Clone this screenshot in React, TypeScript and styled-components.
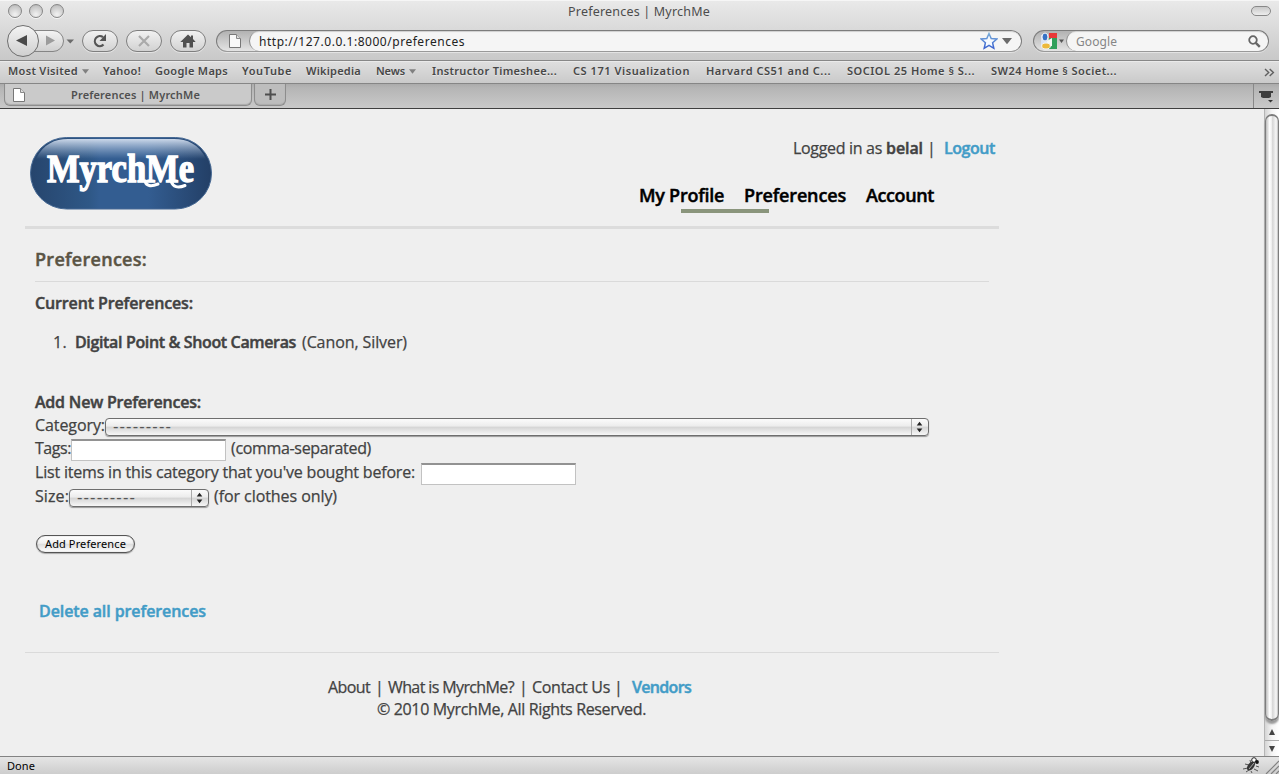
import React, { useLayoutEffect, useRef, useState } from 'react';
import styled, { createGlobalStyle, css } from 'styled-components';

const GlobalStyle = createGlobalStyle`
  html, body { margin: 0; padding: 0; overflow: hidden; }
  *, *::before, *::after { box-sizing: border-box; }
`;

const chromeFont = "'Noto Sans', 'Open Sans', sans-serif";
const pageFont = "'Open Sans', 'Noto Sans', sans-serif";

/* Text tracked so that it fills a known width */
const TrackedText = styled.span<{ $width: number }>`
  display: inline-block;
  flex: none;
  width: ${(p) => p.$width}px;
  white-space: nowrap;
`;

function Text({ w, children }: { w: number; children: string }) {
  const ref = useRef<HTMLSpanElement>(null);
  const [spacing, setSpacing] = useState(0);
  useLayoutEffect(() => {
    const el = ref.current;
    if (!el) return;
    const natural = el.getBoundingClientRect().width;
    setSpacing((w - natural) / Math.max(1, children.length));
  }, [w, children]);
  return (
    <TrackedText $width={w}>
      <span ref={ref} style={{ letterSpacing: `${spacing}px` }}>{children}</span>
    </TrackedText>
  );
}

const Window = styled.div`
  display: flex;
  flex-direction: column;
  width: 1279px;
  height: 774px;
  background: #efefef;
  font-family: ${chromeFont};
  overflow: hidden;
`;

/* ---------- title bar and toolbar ---------- */

const TopChrome = styled.div`
  height: 61px;
  background: linear-gradient(#e9e9e9 0, #dcdcdc 24px, #c8c8c8 60px);
  border-top: 1px solid #f6f6f6;
  border-bottom: 1px solid #878787;
`;

const TitleBar = styled.div`
  display: grid;
  grid-template-columns: 1fr auto 1fr;
  align-items: center;
  height: 21px;
  padding: 0 8px 0 7px;
  font-size: 12.5px;
  color: #4c4c4c;
`;

const Lights = styled.div`
  display: flex;
  gap: 7px;
  margin: 0 0 2px 1px;
`;

const Light = styled.span`
  width: 14px;
  height: 14px;
  border: 1px solid #878787;
  border-radius: 50%;
  background: radial-gradient(circle at 50% 80%, #ededed 10%, #c4c4c4 75%, #a5a5a5);
  box-shadow: 0 1px 0 #f4f4f4;
`;

const TitlePill = styled.span`
  justify-self: end;
  width: 20px;
  height: 10px;
  margin-bottom: 2px;
  border: 1px solid #888;
  border-radius: 5px;
  background: linear-gradient(#c9c9c9, #ededed);
`;

const Toolbar = styled.div`
  display: flex;
  align-items: center;
  height: 38px;
  padding: 0 10px 0 6px;
`;

const BackForward = styled.svg`
  flex: none;
  width: 70px;
  height: 36px;
  margin-right: 6px;
`;

const ToolButton = styled.span`
  display: flex;
  align-items: center;
  justify-content: center;
  flex: none;
  width: 36px;
  height: 22px;
  margin-right: 8px;
  border: 1px solid #7e7e7e;
  border-radius: 11px;
  background: linear-gradient(#f1f1f1, #d2d2d2);
  box-shadow: 0 1px 0 #e3e3e3;
`;

const Field = styled.div<{ $width: number }>`
  display: flex;
  flex: none;
  width: ${(p) => p.$width}px;
  height: 22px;
  border: 1px solid #7c7c7c;
  border-bottom-color: #999;
  border-radius: 11px;
  background: linear-gradient(#b2b2b2, #e4e4e4);
  box-shadow: 0 1px 0 #e3e3e3;
  overflow: hidden;
`;

const FieldIcon = styled.span<{ $width: number }>`
  display: flex;
  align-items: center;
  justify-content: center;
  flex: none;
  width: ${(p) => p.$width}px;
`;

const FieldInput = styled.div<{ $color: string }>`
  display: flex;
  align-items: center;
  flex: 1;
  padding: 0 7px 0 9px;
  border-left: 1px solid #8a8a8a;
  border-radius: 11px;
  background: #f5f5f5;
  box-shadow: inset 0 2px 1px -1px #cfcfcf;
  font-size: 12px;
  color: ${(p) => p.$color};
  > svg:first-of-type { margin-left: auto; }
`;

/* ---------- bookmarks and tabs ---------- */

const Bookmarks = styled.div`
  display: flex;
  align-items: center;
  height: 23px;
  padding: 0 4px 1px 8px;
  background: linear-gradient(#dedede, #cacaca);
  border-top: 1px solid #eaeaea;
  border-bottom: 1px solid #868686;
  font-size: 11px;
  font-weight: 600;
  color: #474747;
  text-shadow: 0 1px 0 #e5e5e5;
`;

const Bookmark = styled.span<{ $gap: number }>`
  display: flex;
  align-items: flex-start;
  height: 20px;
  line-height: 18px;
  margin-right: ${(p) => p.$gap}px;
  svg { margin: 6px 0 0 4px; }
`;

const More = styled.svg`
  margin-left: auto;
`;

const TabStrip = styled.div`
  display: flex;
  height: 25px;
  background: linear-gradient(#ababab, #b5b5b5 4px, #c9c9c9);
  border-bottom: 1px solid #3f3f3f;
`;

const tabShape = css`
  height: 22px;
  border: 1px solid #8d8d8d;
  border-top: 0;
  border-radius: 0 0 6px 6px;
  box-shadow: inset 0 -1px 1px #aaa;
`;

const Tab = styled.div`
  ${tabShape}
  display: flex;
  align-items: center;
  width: 248px;
  margin-left: 4px;
  padding-left: 7px;
  background: #cacaca;
  font-size: 11px;
  font-weight: 600;
  color: #505050;
  svg { margin-right: 45px; }
`;

const NewTab = styled.div`
  ${tabShape}
  display: flex;
  align-items: center;
  justify-content: center;
  width: 32px;
  margin-left: 2px;
  background: #bdbdbd;
`;

const TabList = styled.div`
  display: flex;
  align-items: center;
  width: 26px;
  margin-left: auto;
  padding-left: 5px;
  border-left: 1px solid #888;
`;

/* ---------- page ---------- */

const Viewport = styled.div`
  display: flex;
  flex: 1;
  min-height: 0;
`;

const Page = styled.div`
  flex: 1;
  padding-left: 25px;
  background: #efefef;
  font-family: ${pageFont};
  font-size: 16px;
  color: #424242;
  -webkit-text-stroke: 0.25px currentColor;
`;

const Header = styled.header`
  display: flex;
  justify-content: space-between;
  width: 974px;
  height: 120px;
  padding: 28px 4px 0 5px;
  border-bottom: 3px solid #dcdcdc;
`;

const HeaderRight = styled.div`
  display: flex;
  flex-direction: column;
`;

const Login = styled.div`
  display: flex;
  justify-content: flex-end;
  height: 22px;
  line-height: 22px;
`;

const Spacer = styled.span<{ $w: number }>`
  flex: none;
  width: ${(p) => p.$w}px;
`;

const strongText = css`
  font-weight: 600;
  -webkit-text-stroke: 0.45px currentColor;
`;

const Strong = styled.span`
  ${strongText}
`;

const Link = styled.a`
  ${strongText}
  color: #429cc7;
`;

const Nav = styled.nav`
  ${strongText}
  position: relative;
  display: flex;
  gap: 20px;
  height: 26px;
  margin-top: 23px;
  padding-right: 61px;
  line-height: 26px;
  font-size: 18px;
  color: #000;
  &::after {
    content: '';
    position: absolute;
    left: 42px;
    top: 27px;
    width: 88px;
    height: 4px;
    background: #8a957c;
  }
`;

const Main = styled.main`
  width: 974px;
  height: 423px;
  padding: 0 10px;
`;

const Title = styled.h1`
  ${strongText}
  height: 53px;
  margin: 0;
  padding-top: 17px;
  border-bottom: 1px solid #dadada;
  font-size: 18px;
  line-height: 26px;
  color: #5a5444;
`;

const Line = styled.div<{ $top?: number; $indent?: number; $bold?: boolean }>`
  display: flex;
  align-items: center;
  height: 24px;
  margin-top: ${(p) => p.$top ?? 0}px;
  padding-left: ${(p) => p.$indent ?? 0}px;
  line-height: 22px;
  ${(p) => p.$bold && strongText}
`;

const FormRow = styled.div<{ $h?: number }>`
  display: flex;
  align-items: center;
  height: ${(p) => p.$h ?? 24}px;
  line-height: 22px;
  > ${TrackedText} { margin-bottom: 2px; }
`;

const Input = styled.span`
  flex: none;
  width: 155px;
  height: 22px;
  margin-top: 2px;
  border: 1px solid #c2c2c2;
  border-top: 2px solid #929292;
  background: #fff;
`;

const SelectBox = styled.span<{ $width: number }>`
  display: flex;
  justify-content: space-between;
  flex: none;
  width: ${(p) => p.$width}px;
  height: 18px;
  margin-top: 3px;
  padding-left: 7px;
  border: 1px solid #6e6e6e;
  border-radius: 4px;
  background: linear-gradient(#fbfbfb, #ececec 45%, #d4d4d4 50%, #f7f7f7);
  box-shadow: 0 1px 1px #999;
  line-height: 17px;
  font-family: 'DejaVu Sans', sans-serif;
  font-size: 15px;
  color: #555;
  -webkit-text-stroke: 0;
`;

const Stepper = styled.svg`
  flex: none;
  border-left: 1px solid #aaa;
`;

const Button = styled.button`
  display: flex;
  align-items: center;
  width: 99px;
  height: 18px;
  margin: 27px 0 0 1px;
  padding: 0 0 0 8px;
  border: 1px solid #555;
  border-radius: 10px;
  background: linear-gradient(#fff, #f0f0f0 45%, #dedede 52%, #fff);
  box-shadow: inset 0 0 1px #777, 0 1px 1px #aaa;
  font-family: ${chromeFont};
  font-size: 11px;
  line-height: 14px;
  color: #000;
  -webkit-text-stroke: 0;
`;

const Footer = styled.footer`
  width: 974px;
  padding-top: 23px;
  border-top: 1px solid #dadada;
`;

const FooterLine = styled.div<{ $left: number }>`
  display: flex;
  height: 22px;
  padding-left: ${(p) => p.$left}px;
  line-height: 22px;
`;

/* ---------- scrollbar and status bar ---------- */

const Scrollbar = styled.div`
  display: flex;
  flex-direction: column;
  width: 15px;
  padding-top: 5px;
  border-left: 1px solid #b5b5b5;
  background: linear-gradient(90deg, #d5d5d5, #f5f5f5 50%, #fff);
`;

const Thumb = styled.div`
  flex: 1;
  border: 2px solid #7d7d7d;
  border-left-width: 1px;
  border-right-width: 1px;
  border-radius: 7px;
  background: linear-gradient(90deg, #bdbdbd, #fff 30%, #ededed 48%, #d6d6d6 55%, #f8f8f8 85%, #bbb);
  box-shadow: 0 3px 2px #999;
`;

const ScrollArrow = styled.span<{ $top?: number }>`
  display: flex;
  align-items: center;
  justify-content: center;
  height: 16px;
  margin-top: ${(p) => p.$top ?? 0}px;
  border-top: ${(p) => (p.$top ? '0' : '1px solid #aaa')};
`;

const StatusBar = styled.div`
  display: flex;
  align-items: center;
  height: 18px;
  padding-left: 7px;
  border-top: 1px solid #838383;
  background: linear-gradient(#e5e5e5, #cdcdcd);
  font-size: 11px;
  color: #000;
`;

const StatusIcons = styled.svg`
  margin-left: auto;
`;

const DownArrow = ({ w = 7, fill = '#808080' }: { w?: number; fill?: string }) => (
  <svg width={w} height={w} viewBox="0 0 8 8"><path d="M0 1.5h8L4 6.5z" fill={fill} /></svg>
);

const PageIcon = ({ fill = '#f8f8f8' }: { fill?: string }) => (
  <svg width="14" height="16" viewBox="0 0 14 16">
    <path d="M1.5 1.5h7l4 4v9h-11z" fill={fill} stroke="#777" />
    <path d="M8.5 1.5v4h4" fill="#ddd" stroke="#888" />
  </svg>
);

const LogoSvg = styled.svg`
  flex: none;
  overflow: visible;
`;

const Logo = () => (
  <LogoSvg width="182" height="73" viewBox="0 0 182 73">
    <defs>
      <linearGradient id="pill">
        <stop offset="0" stopColor="#26456d" />
        <stop offset=".33" stopColor="#2f5887" />
        <stop offset=".38" stopColor="#335d91" />
        <stop offset=".65" stopColor="#335d91" />
        <stop offset="1" stopColor="#233f66" />
      </linearGradient>
      <linearGradient id="gloss" x2="0" y2="1">
        <stop offset="0" stopColor="#d3deee" stopOpacity=".95" />
        <stop offset="1" stopColor="#a5bedc" stopOpacity="0" />
      </linearGradient>
    </defs>
    <rect x=".5" y=".5" width="181" height="71.5" rx="36" fill="url(#pill)" stroke="#466994" />
    <path d="M6 22C13 7 25 2 38 2H144C157 2 169 7 176 22Z" fill="url(#gloss)" />
    <g fill="#fff" stroke="#fff">
      <text x="17" y="44.5" textLength="147" lengthAdjust="spacingAndGlyphs" fontFamily="'Liberation Serif', serif" fontSize="40" fontWeight="700" strokeWidth="1.4">MyrchMe</text>
      <path d="M115 44Q117 51.5 128 47M141 44Q144 53 155 48.5" fill="none" strokeWidth="3" strokeLinecap="round" />
    </g>
  </LogoSvg>
);

const StepperArrows = () => (
  <Stepper width="17" height="16" viewBox="0 0 17 16">
    <path d="M5 6.5L8 2.5l3 4zM5 9.5l3 4 3-4z" fill="#222" />
  </Stepper>
);

const bookmarks: { label: string; w: number; gap: number; menu?: boolean }[] = [
  { label: 'Most Visited', w: 70, gap: 14, menu: true },
  { label: 'Yahoo!', w: 38, gap: 14 },
  { label: 'Google Maps', w: 73, gap: 14 },
  { label: 'YouTube', w: 50, gap: 14 },
  { label: 'Wikipedia', w: 55, gap: 15 },
  { label: 'News', w: 29, gap: 16, menu: true },
  { label: 'Instructor Timeshee...', w: 125, gap: 16 },
  { label: 'CS 171 Visualization', w: 117, gap: 16 },
  { label: 'Harvard CS51 and C...', w: 125, gap: 16 },
  { label: 'SOCIOL 25 Home § S...', w: 128, gap: 16 },
  { label: 'SW24 Home § Societ...', w: 126, gap: 0 },
];

export default function App() {
  return (
    <Window>
      <GlobalStyle />
      <TopChrome>
        <TitleBar>
          <Lights><Light /><Light /><Light /></Lights>
          <Text w={142}>Preferences | MyrchMe</Text>
          <TitlePill />
        </TitleBar>
        <Toolbar>
          <BackForward viewBox="0 0 70 36">
            <defs>
              <linearGradient id="btn" x2="0" y2="1">
                <stop offset="0" stopColor="#f4f4f4" />
                <stop offset="1" stopColor="#cfcfcf" />
              </linearGradient>
            </defs>
            <rect x="12" y="7.5" width="45.5" height="21" rx="10.5" fill="url(#btn)" stroke="#858585" />
            <circle cx="17" cy="18" r="15.5" fill="url(#btn)" stroke="#6e6e6e" />
            <path d="M10 17.5L21 12v11z" fill="#4a4a4a" />
            <path d="M49 17.5L40 12.5v10z" fill="#9c9c9c" />
            <path d="M60.5 16.5h7.5l-3.7 4z" fill="#6b6b6b" />
          </BackForward>
          <ToolButton>
            <svg width="16" height="16" viewBox="0 0 16 16">
              <path d="M11.5 11.5A5 5 0 1 1 11 4.2" fill="none" stroke="#555" strokeWidth="2.2" />
              <path d="M14 1v7H7.5z" fill="#555" />
            </svg>
          </ToolButton>
          <ToolButton>
            <svg width="14" height="14" viewBox="0 0 14 14">
              <path d="M2 2l10 10M12 2L2 12" stroke="#aaa" strokeWidth="2.2" />
            </svg>
          </ToolButton>
          <ToolButton>
            <svg width="16" height="14" viewBox="0 0 16 14">
              <path d="M8 .5L11 3.3V1.5h2v3.6L15.7 8H13v5.5H9.5V9h-3v4.5H3V8H.3z" fill="#505050" />
            </svg>
          </ToolButton>
          <Spacer $w={2} />
          <Field $width={806}>
            <FieldIcon $width={32}><Spacer $w={4} /><PageIcon /></FieldIcon>
            <FieldInput $color="#222">
              <Text w={206}>http://127.0.0.1:8000/preferences</Text>
              <svg width="18" height="18" viewBox="0 0 18 18">
                <defs>
                  <linearGradient id="star" x2="0" y2="1">
                    <stop offset="0" stopColor="#79acd9" />
                    <stop offset="1" stopColor="#3a62cf" />
                  </linearGradient>
                </defs>
                <path d="M9 1.5l2.2 5 5.6.5-4.2 3.7 1.2 5.6L9 13.4l-4.8 2.9 1.2-5.6L1.2 7l5.6-.5z" fill="#f4f9ff" stroke="url(#star)" strokeWidth="1.5" />
              </svg>
              <Spacer $w={4} />
              <DownArrow w={10} fill="#6b6b6b" />
              <Spacer $w={2} />
            </FieldInput>
          </Field>
          <Spacer $w={11} />
          <Field $width={236}>
            <FieldIcon $width={32}>
              <Spacer $w={4} />
              <svg width="25" height="18" viewBox="0 0 25 18">
                <path d="M9 1h8v16H9z" fill="#31a05c" />
                <path d="M9 1h8v5H9z" fill="#e93838" />
                <path d="M1 3h7v11H1z" fill="#d9e3f4" />
                <path d="M7 9l5-3v8l-5 1z" fill="#f5f8f5" />
                <ellipse cx="5" cy="5" rx="3" ry="4" fill="#3672c5" stroke="#f5f5f5" />
                <ellipse cx="6" cy="14" rx="4.3" ry="3" fill="#ecb93c" stroke="#f5f5f5" />
                <path d="M19 7.5h5l-2.5 3.5z" fill="#555" />
              </svg>
            </FieldIcon>
            <FieldInput $color="#868686">
              <Text w={41}>Google</Text>
              <svg width="13" height="13" viewBox="0 0 13 13">
                <circle cx="5" cy="5" r="3.8" fill="none" stroke="#666" strokeWidth="1.8" />
                <path d="M7.8 7.8l4 4" stroke="#666" strokeWidth="2.4" />
              </svg>
            </FieldInput>
          </Field>
        </Toolbar>
      </TopChrome>
      <Bookmarks>
        {bookmarks.map((b) => (
          <Bookmark key={b.label} $gap={b.gap}>
            <Text w={b.w}>{b.label}</Text>
            {b.menu && <DownArrow />}
          </Bookmark>
        ))}
        <More width="11" height="9" viewBox="0 0 11 9">
          <path d="M1 1l3.7 3.5L1 8M5.7 1l3.7 3.5L5.7 8" fill="none" stroke="#606060" strokeWidth="1.4" />
        </More>
      </Bookmarks>
      <TabStrip>
        <Tab><PageIcon fill="#fff" /><Text w={129}>Preferences | MyrchMe</Text></Tab>
        <NewTab>
          <svg width="11" height="11" viewBox="0 0 11 11"><path d="M5.5 0v11M0 5.5h11" stroke="#4e4e4e" strokeWidth="2" /></svg>
        </NewTab>
        <TabList>
          <svg width="15" height="13" viewBox="0 0 15 13">
            <path d="M0 1h14v2h-2v4l-2 1H4L2 7V3H0z" fill="#3e3e3e" />
            <path d="M9 10h5l-2.5 2.5z" fill="#333" />
          </svg>
        </TabList>
      </TabStrip>
      <Viewport>
        <Page>
          <Header>
            <Logo />
            <HeaderRight>
              <Login>
                <Text w={89}>Logged in as</Text><Spacer $w={4} />
                <Strong><Text w={37}>belal</Text></Strong><Spacer $w={4} />
                <Text w={5}>|</Text><Spacer $w={12} />
                <Link><Text w={51}>Logout</Text></Link>
              </Login>
              <Nav>
                <Text w={85}>My Profile</Text>
                <Text w={102}>Preferences</Text>
                <Text w={68}>Account</Text>
              </Nav>
            </HeaderRight>
          </Header>
          <Main>
            <Title><Text w={112}>Preferences:</Text></Title>
            <Line $top={9} $bold><Text w={158}>Current Preferences:</Text></Line>
            <Line $top={15} $indent={18}>
              <Text w={14}>1.</Text><Spacer $w={8} />
              <Strong><Text w={221}>Digital Point &amp; Shoot Cameras</Text></Strong><Spacer $w={6} />
              <Text w={105}>(Canon, Silver)</Text>
            </Line>
            <Line $top={36} $bold><Text w={166}>Add New Preferences:</Text></Line>
            <FormRow $h={23}>
              <Text w={70}>Category:</Text>
              <SelectBox $width={824}><Text w={59}>---------</Text><StepperArrows /></SelectBox>
            </FormRow>
            <FormRow>
              <Text w={36}>Tags:</Text>
              <Input /><Spacer $w={5} />
              <Text w={140}>(comma-separated)</Text>
            </FormRow>
            <FormRow>
              <Text w={380}>List items in this category that you've bought before:</Text>
              <Spacer $w={6} /><Input />
            </FormRow>
            <FormRow $h={23}>
              <Text w={34}>Size:</Text>
              <SelectBox $width={140}><Text w={59}>---------</Text><StepperArrows /></SelectBox>
              <Spacer $w={5} /><Text w={123}>(for clothes only)</Text>
            </FormRow>
            <Button><Text w={81}>Add Preference</Text></Button>
            <Line $top={46} $indent={4}><Link><Text w={167}>Delete all preferences</Text></Link></Line>
          </Main>
          <Footer>
            <FooterLine $left={303}>
              <Text w={42}>About</Text><Spacer $w={5} /><Text w={5}>|</Text><Spacer $w={8} />
              <Text w={126}>What is MyrchMe?</Text><Spacer $w={5} /><Text w={5}>|</Text><Spacer $w={8} />
              <Text w={78}>Contact Us</Text><Spacer $w={4} /><Text w={5}>|</Text><Spacer $w={13} />
              <Link><Text w={59}>Vendors</Text></Link>
            </FooterLine>
            <FooterLine $left={352}><Text w={269}>© 2010 MyrchMe, All Rights Reserved.</Text></FooterLine>
          </Footer>
        </Page>
        <Scrollbar>
          <Thumb />
          <ScrollArrow $top={3}><svg width="8" height="7" viewBox="0 0 8 7"><path d="M1 6h6L4 0z" fill="#444" /></svg></ScrollArrow>
          <ScrollArrow><svg width="8" height="7" viewBox="0 0 8 7"><path d="M1 1h6L4 7z" fill="#444" /></svg></ScrollArrow>
        </Scrollbar>
      </Viewport>
      <StatusBar>
        <Text w={28}>Done</Text>
        <StatusIcons width="37" height="17" viewBox="0 0 37 17">
          <path d="M3 7l4 1M1 12l5-1M4 15l3-2M8 3l1 4M14 9l3 1M12 12l4 2M9 14l1 2" stroke="#555" />
          <ellipse cx="9" cy="9" rx="3" ry="5.2" transform="rotate(40 9 9)" fill="#353535" />
          <path d="M7 12l5-6" stroke="#aaa" />
          <circle cx="12" cy="3" r="2.3" fill="#fff" stroke="#222" />
          <circle cx="15" cy="5" r="1.9" fill="#111" />
          <path d="M24 17L37 4M29 17l8-8M34 17l3-3" stroke="#808080" strokeWidth="1.2" />
        </StatusIcons>
      </StatusBar>
    </Window>
  );
}
